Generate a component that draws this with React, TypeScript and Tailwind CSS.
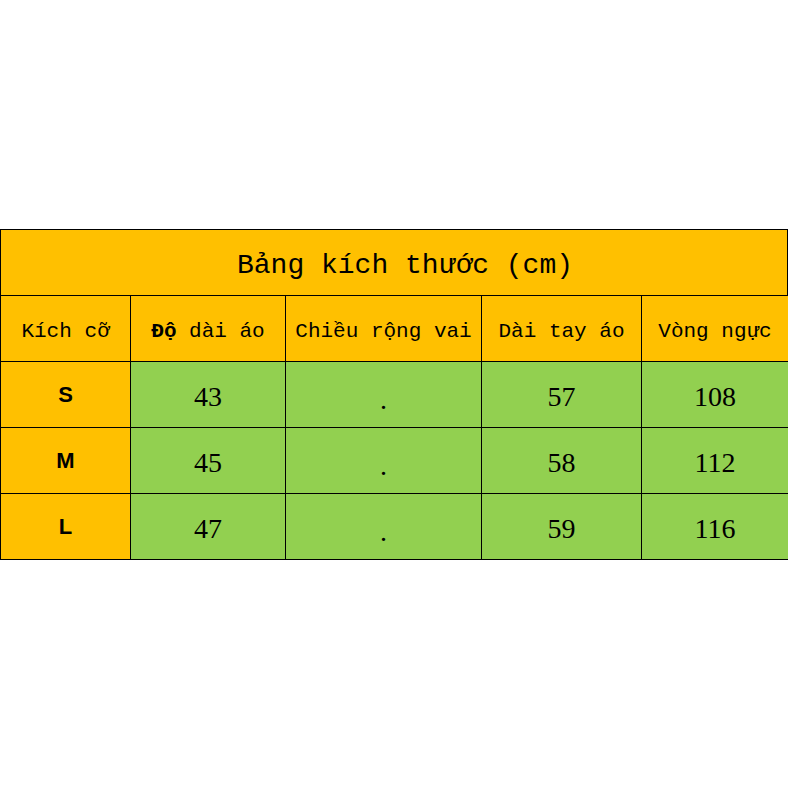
const cols = 'grid grid-cols-[130px_155px_196px_160px_147px]'

const headers = ['Kích cỡ', 'Độ dài áo', 'Chiều rộng vai', 'Dài tay áo', 'Vòng ngực']

const rows = [
  { size: 'S', values: ['43', '.', '57', '108'] },
  { size: 'M', values: ['45', '.', '58', '112'] },
  { size: 'L', values: ['47', '.', '59', '116'] },
]

const mono = { fontFamily: '"Liberation Mono", "DejaVu Sans Mono", monospace' }

export default function App() {
  return (
    <div className="w-[788px] h-[788px] bg-white flex flex-col">
      <div className="h-[229px]" />
      <div className="w-[788px] border-t border-l border-black text-black">
        {/* title */}
        <div
          className="h-[66px] bg-[#ffc000] border-r border-b border-black flex items-center justify-center text-[28px] pl-[22px] pt-[6px]"
          style={mono}
        >
          Bảng kích thước (cm)
        </div>

        {/* header */}
        <div className={cols}>
          {headers.map((h, i) => (
            <div
              key={h}
              className="h-[66px] bg-[#ffc000] border-r border-b border-black flex items-center justify-center text-[21px] pt-[6px]"
              style={mono}
            >
              {i === 1 ? (
                <span>
                  <b>Độ</b> dài áo
                </span>
              ) : (
                h
              )}
            </div>
          ))}
        </div>

        {/* rows */}
        {rows.map(r => (
          <div key={r.size} className={cols}>
            <div className="h-[66px] bg-[#ffc000] border-r border-b border-black flex items-center justify-center text-[22px] font-semibold font-['Liberation_Sans',sans-serif]">
              {r.size}
            </div>
            {r.values.map((v, i) => (
              <div
                key={i}
                className={`h-[66px] bg-[#92d050] border-r border-b border-black flex items-center justify-center font-['Liberation_Serif',serif] text-[28px] ${
                  v === '.' ? 'pt-[10px]' : 'pt-[4px]'
                }`}
              >
                {v}
              </div>
            ))}
          </div>
        ))}
      </div>
    </div>
  )
}
